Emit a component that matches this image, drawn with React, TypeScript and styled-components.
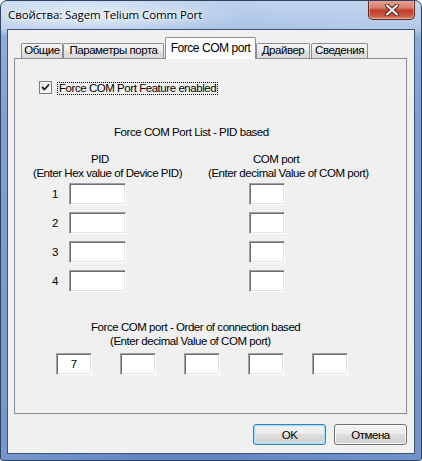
import styled, { createGlobalStyle } from 'styled-components';

const GlobalStyle = createGlobalStyle`
  html, body {
    margin: 0;
    padding: 0;
    background: #ffffff;
  }
  body {
    font-family: "Liberation Sans", Arial, sans-serif;
    font-size: 11.5px;
    letter-spacing: -0.45px;
    color: #000;
  }
  * {
    box-sizing: border-box;
  }
`;

const tabs = [
  { label: 'Общие', w: 42, gap: 0 },
  { label: 'Параметры порта', w: 101, gap: 0 },
  { label: 'Force COM port', w: 91, gap: 1, active: true },
  { label: 'Драйвер', w: 54, gap: 0 },
  { label: 'Сведения', w: 57, gap: 1 },
];

const pidRows = ['1', '2', '3', '4'];
const orderValues = ['7', '', '', '', ''];

const CheckMark = () => (
  <svg width="9" height="9" viewBox="0 0 9 9">
    <path d="M1 4 L3.5 6.5 L8 1.5" fill="none" stroke="#1a1a1a" strokeWidth="1.8" />
  </svg>
);

const CloseGlyph = () => (
  <svg width="14" height="12" viewBox="0 0 14 12">
    <path
      d="M2 1.5 L12 10.5 M12 1.5 L2 10.5"
      stroke="#4a1a14"
      strokeWidth="4"
      strokeLinecap="round"
    />
    <path
      d="M2 1.5 L12 10.5 M12 1.5 L2 10.5"
      stroke="#ffffff"
      strokeWidth="2.2"
      strokeLinecap="round"
    />
  </svg>
);

const App = () => {
  return (
    <>
      <GlobalStyle />
      <Window>
        <TitleBar>
          <TitleText>Свойства: Sagem Telium Comm Port</TitleText>
          <CloseButton>
            <CloseGlyph />
          </CloseButton>
        </TitleBar>
        <Client>
          <TabStrip>
            {tabs.map((t) => (
              <Tab key={t.label} $w={t.w} $gap={t.gap} $active={!!t.active}>
                {t.label}
              </Tab>
            ))}
          </TabStrip>
          <Panel>
            <CheckRow>
              <CheckBox>
                <CheckMark />
              </CheckBox>
              <FocusLabel>Force COM Port Feature enabled</FocusLabel>
            </CheckRow>

            <Caption $indent={99} $top={30}>
              Force COM Port List - PID based
            </Caption>

            <Columns>
              <Column $left={18} $w={155}>
                <Caption $indent={58}>PID</Caption>
                <Caption>(Enter Hex value of Device PID)</Caption>
                <FieldList>
                  {pidRows.map((n) => (
                    <FieldRow key={n}>
                      <RowNumber>{n}</RowNumber>
                      <Field $w={57} readOnly value="" />
                    </FieldRow>
                  ))}
                </FieldList>
              </Column>
              <Column $left={20} $w={165}>
                <Caption $indent={45}>COM port</Caption>
                <Caption>(Enter decimal Value of COM port)</Caption>
                <FieldList $indent={41}>
                  {pidRows.map((n) => (
                    <FieldRow key={n}>
                      <Field $w={36} readOnly value="" />
                    </FieldRow>
                  ))}
                </FieldList>
              </Column>
            </Columns>

            <Caption $indent={76} $top={28}>
              Force COM port - Order of connection based
            </Caption>
            <Caption $indent={95}>(Enter decimal Value of COM port)</Caption>
            <OrderRow>
              {orderValues.map((v, i) => (
                <Field key={i} $w={36} readOnly value={v} />
              ))}
            </OrderRow>
          </Panel>
          <ButtonBar>
            <DialogButton $default>OK</DialogButton>
            <DialogButton>Отмена</DialogButton>
          </ButtonBar>
        </Client>
      </Window>
    </>
  );
};

export default App;

const Window = styled.div`
  width: 422px;
  height: 461px;
  display: flex;
  flex-direction: column;
  border: 1px solid #2f4260;
  border-radius: 7px 7px 3px 3px;
  overflow: hidden;
  background:
    radial-gradient(ellipse 150px 22px at 90px 14px, rgba(235, 243, 252, 0.85), rgba(235, 243, 252, 0) 100%),
    linear-gradient(90deg, rgba(255, 255, 255, 0.15), rgba(255, 255, 255, 0) 40%, rgba(255, 255, 255, 0.12) 100%),
    linear-gradient(180deg, #bcd1ec 0px, #a9c2e6 28px, #7f9fd2 36px, #6d8fc8 120px, #5f84c2 100%);
`;

const TitleBar = styled.div`
  height: 28px;
  display: flex;
  align-items: flex-start;
  padding-left: 7px;
  flex-shrink: 0;
`;

const TitleText = styled.div`
  font-family: "Open Sans", "Noto Sans", sans-serif;
  font-size: 11.5px;
  line-height: 16px;
  padding-top: 6px;
  letter-spacing: -0.1px;
  color: #000;
  text-shadow: 0 0 6px #ffffff, 0 0 3px #f4f8fd;
`;

const CloseButton = styled.div`
  margin-left: auto;
  margin-right: 6px;
  margin-top: -1px;
  width: 47px;
  height: 20px;
  display: flex;
  align-items: center;
  justify-content: center;
  border: 1px solid #5a2a24;
  border-top: none;
  border-radius: 0 0 5px 5px;
  background: linear-gradient(180deg, #e8a596 0%, #d9806d 40%, #c0402c 55%, #c9543c 80%, #e0856a 100%);
  box-shadow: inset 0 0 0 1px rgba(255, 210, 200, 0.45);
`;

const Client = styled.div`
  flex: 1;
  margin: 0 6px 6px 6px;
  border: 1px solid #3d5478;
  background: #f0f0f0;
  display: flex;
  flex-direction: column;
  padding: 7px 7px 8px 6px;
`;

const TabStrip = styled.div`
  height: 21px;
  display: flex;
  align-items: flex-end;
  padding-left: 7px;
  position: relative;
  z-index: 1;
`;

const Tab = styled.div<{ $w: number; $gap: number; $active: boolean }>`
  width: ${(p) => p.$w}px;
  margin-left: ${(p) => p.$gap}px;
  height: ${(p) => (p.$active ? 22 : 15)}px;
  margin-bottom: ${(p) => (p.$active ? -1 : 0)}px;
  border: 1px solid #898c95;
  border-bottom: none;
  border-radius: 2px 2px 0 0;
  text-align: center;
  font-size: ${(p) => (p.$active ? 12 : 11.5)}px;
  line-height: 12px;
  padding-top: ${(p) => (p.$active ? 4 : 0)}px;
  white-space: nowrap;
  color: #000;
  background: ${(p) =>
    p.$active
      ? '#ffffff'
      : 'linear-gradient(180deg, #f5f5f5 0%, #ececec 50%, #e0e0e0 51%, #dadada 100%)'};
`;

const Panel = styled.div`
  height: 356px;
  border: 1px solid #898c95;
  background: #f0f0f0;
  display: flex;
  flex-direction: column;
`;

const CheckRow = styled.div`
  margin-top: 22px;
  padding-left: 24px;
  display: flex;
  align-items: flex-start;
  gap: 5px;
`;

const CheckBox = styled.div`
  width: 13px;
  height: 13px;
  border: 1px solid #7f7f7f;
  background: linear-gradient(135deg, #dcdcdc 0%, #f6f6f6 60%, #ffffff 100%);
  box-shadow: inset 0 0 0 1px #f4f4f4;
  display: flex;
  align-items: center;
  justify-content: center;
`;

const FocusLabel = styled.span`
  margin-top: 1px;
  border: 1px dotted #000;
  padding: 0 1px;
  line-height: 11px;
  white-space: nowrap;
`;

const Caption = styled.div<{ $indent?: number; $top?: number }>`
  padding-left: ${(p) => p.$indent ?? 0}px;
  margin-top: ${(p) => p.$top ?? 0}px;
  line-height: 14px;
  white-space: nowrap;
`;

const Columns = styled.div`
  margin-top: 13px;
  display: flex;
`;

const Column = styled.div<{ $left: number; $w: number }>`
  margin-left: ${(p) => p.$left}px;
  width: ${(p) => p.$w}px;
  display: flex;
  flex-direction: column;
`;

const FieldList = styled.div<{ $indent?: number }>`
  margin-top: 3px;
  padding-left: ${(p) => p.$indent ?? 0}px;
  display: flex;
  flex-direction: column;
  gap: 7px;
`;

const FieldRow = styled.div`
  display: flex;
  align-items: center;
`;

const RowNumber = styled.span`
  width: 25px;
  margin-right: 11px;
  text-align: right;
`;

const Field = styled.input<{ $w: number }>`
  width: ${(p) => p.$w}px;
  height: 22px;
  margin: 0;
  padding: 0 2px;
  font-family: "Liberation Sans", Arial, sans-serif;
  font-size: 11.5px;
  text-align: center;
  color: #000;
  background: #ffffff;
  border: 1px solid;
  border-color: #a0a0a0 #ffffff #ffffff #a0a0a0;
  box-shadow: inset 1px 1px 0 #6e6e6e, inset -1px -1px 0 #e3e3e3;
  outline: none;
`;

const OrderRow = styled.div`
  margin-top: 5px;
  padding-left: 41px;
  display: flex;
  gap: 28px;
`;

const ButtonBar = styled.div`
  margin-top: 10px;
  display: flex;
  justify-content: flex-end;
  gap: 8px;
`;

const DialogButton = styled.button<{ $default?: boolean }>`
  width: 73px;
  height: 21px;
  margin: 0;
  padding: 0;
  font-family: "Liberation Sans", Arial, sans-serif;
  font-size: 11.5px;
  letter-spacing: -0.45px;
  color: #000;
  border-radius: 3px;
  border: 1px solid ${(p) => (p.$default ? '#3c7fb1' : '#707070')};
  background: linear-gradient(180deg, #f2f2f2 0%, #ebebeb 49%, #dddddd 50%, #cfcfcf 100%);
  box-shadow: ${(p) =>
    p.$default
      ? 'inset 0 0 0 1px #9fdcf7, inset 0 0 0 2px rgba(200, 235, 250, 0.6)'
      : 'inset 0 0 0 1px #fcfcfc'};
`;
